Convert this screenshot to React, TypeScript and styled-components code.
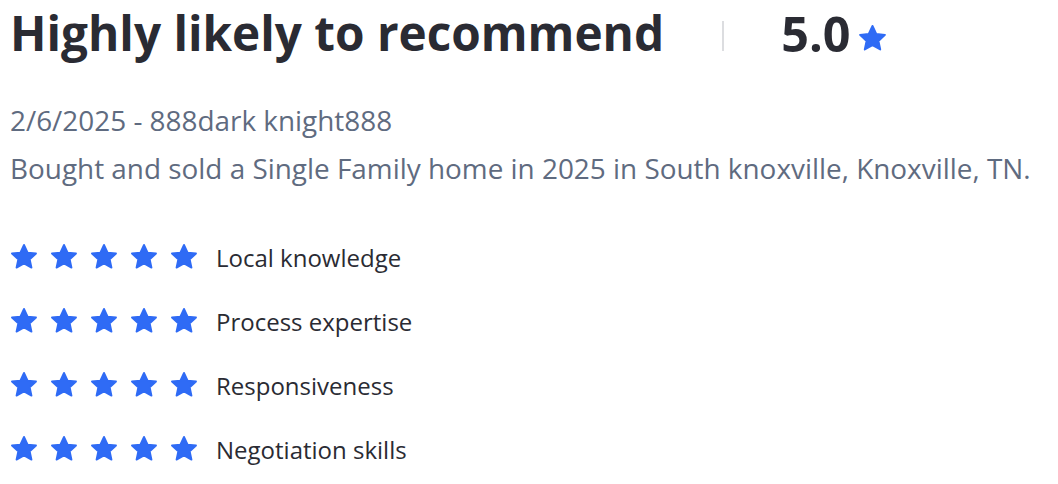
import styled, { createGlobalStyle } from 'styled-components';

const GlobalStyle = createGlobalStyle`
  body {
    margin: 0;
    background: #ffffff;
    font-family: 'Open Sans', 'Liberation Sans', sans-serif;
  }
`;

const StyledReview = styled.div`
  padding: 0 10px;
  display: flex;
  flex-direction: column;
`;

const Header = styled.div`
  display: flex;
  align-items: center;
  height: 66px;
`;

const Title = styled.h1`
  margin: 0;
  font-size: 47.7px;
  font-weight: 700;
  color: #2a2b33;
  line-height: 1;
`;

const Divider = styled.span`
  width: 2px;
  height: 30px;
  background: #dcdde0;
  margin: 6px 57px 0 58px;
`;

const Score = styled.span`
  font-size: 48.5px;
  font-weight: 700;
  color: #2a2b33;
  line-height: 1;
`;

const ScoreStar = styled.span`
  display: flex;
  margin: 10px 0 0 8px;
`;

const MetaBlock = styled.div`
  margin-top: 30px;
  display: flex;
  flex-direction: column;
`;

const Meta = styled.p`
  margin: 0;
  font-size: 27.9px;
  color: #5f6b80;
  line-height: 48px;
  white-space: nowrap;
`;

const Ratings = styled.div`
  margin-top: 33px;
  display: flex;
  flex-direction: column;
`;

const RatingRow = styled.div`
  display: flex;
  align-items: center;
  height: 64px;
`;

const Stars = styled.div`
  display: flex;
  gap: 12px;
  margin-right: 18px;
`;

const Label = styled.span`
  font-size: 24px;
  color: #2a2b33;
`;

function Star({ size }: { size: number }) {
  return (
    <svg width={size} height={size} viewBox="0 0 24 24">
      <path
        d="M12 1.6l3.1 6.6 7.2.8-5.4 5 1.5 7.1L12 17.5l-6.4 3.6 1.5-7.1-5.4-5 7.2-.8z"
        fill="#2f6bf5"
        stroke="#2f6bf5"
        strokeWidth="1.6"
        strokeLinejoin="round"
      />
    </svg>
  );
}

const categories = [
  'Local knowledge',
  'Process expertise',
  'Responsiveness',
  'Negotiation skills',
];

function App() {
  return (
    <StyledReview>
      <GlobalStyle />
      <Header>
        <Title>Highly likely to recommend</Title>
        <Divider />
        <Score>5.0</Score>
        <ScoreStar>
          <Star size={29} />
        </ScoreStar>
      </Header>
      <MetaBlock>
        <Meta>2/6/2025 - 888dark knight888</Meta>
        <Meta>
          Bought and sold a Single Family home in 2025 in South knoxville,
          Knoxville, TN.
        </Meta>
      </MetaBlock>
      <Ratings>
        {categories.map((name) => (
          <RatingRow key={name}>
            <Stars>
              {[0, 1, 2, 3, 4].map((i) => (
                <Star key={i} size={28} />
              ))}
            </Stars>
            <Label>{name}</Label>
          </RatingRow>
        ))}
      </Ratings>
    </StyledReview>
  );
}

export default App;
